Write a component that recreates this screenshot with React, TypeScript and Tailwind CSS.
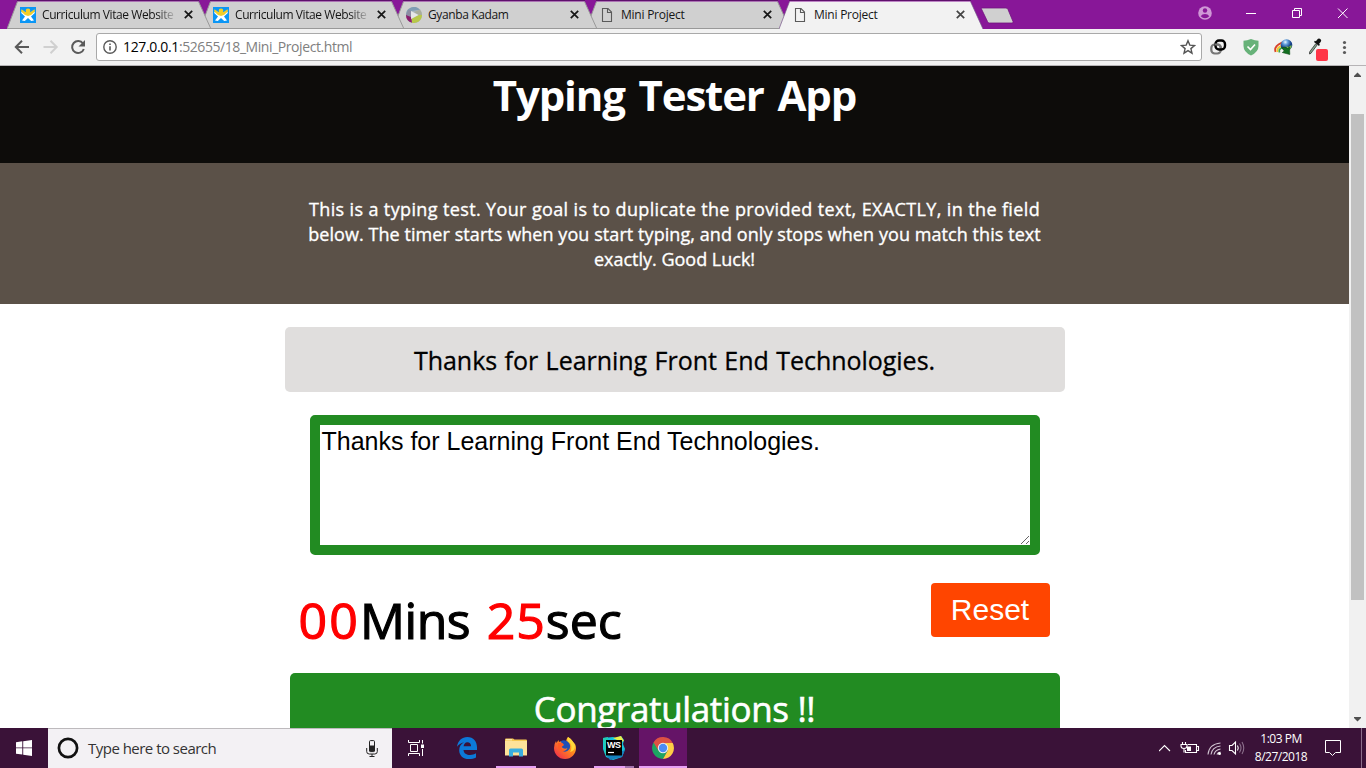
import React from 'react';

const comic = "font-['Open_Sans','Noto_Sans',sans-serif]";

function WixIcon() {
  return (
    <svg width="16" height="16" viewBox="0 0 16 16" className="shrink-0">
      <rect width="16" height="16" fill="#0b96f5" />
      <path d="M1.500 4.500 5 7l3-.5L11 7l3.500-2.500.3 1.500L11 9.500l3 4-2.800.5L8 11l-3.200 3-2.800-.5 3-4L1.200 6Z" fill="#fff" />
      <path d="m1.500 2.300 4 2.700h5l4-2.700.5 2L11 8 8 9 5 8 1 4.300Z" fill="#f0cd2c" />
      <circle cx="8" cy="3.800" r="2.300" fill="#f6cf23" />
    </svg>
  );
}

function SwirlIcon() {
  return (
    <svg width="16" height="16" viewBox="0 0 16 16" className="shrink-0">
      <circle cx="8" cy="8" r="8" fill="#a9b6bd" />
      <path d="M0 8A8 8 0 0 1 14 2.700L5 4v6Z" fill="#7f9db4" />
      <path d="M14 2.700A8 8 0 0 1 16 8l-3.500 0L8 5Z" fill="#a9ad9b" />
      <path d="M16 8A8 8 0 0 1 6 15.700L5 12l7.500-4Z" fill="#b8c84a" />
      <path d="M0 8a8 8 0 0 0 6 7.700L5 9 1 8Z" fill="#8b1c6e" />
      <path d="M2.500 2.500 5 4v6L0 8Z" fill="#8d8ba3" />
      <path d="m5 4 7.500 4L5 12Z" fill="#e6e6e6" />
    </svg>
  );
}

function PageIcon() {
  return (
    <svg width="16" height="16" viewBox="0 0 16 16" className="shrink-0" fill="none" stroke="#5a5a5a" strokeWidth="1.100">
      <path d="M3.500 1.500h5.500l3.500 3.500v9.500h-9Z" />
      <path d="M8.500 1.500v4h4" />
    </svg>
  );
}

const tabs = [
  { title: 'Curriculum Vitae Website', icon: <WixIcon />, z: 'z-[4]' },
  { title: 'Curriculum Vitae Website', icon: <WixIcon />, z: 'z-[3]' },
  { title: 'Gyanba Kadam', icon: <SwirlIcon />, z: 'z-[2]' },
  { title: 'Mini Project', icon: <PageIcon />, z: 'z-[1]' },
  { title: 'Mini Project', icon: <PageIcon />, z: 'z-[5]', active: true },
];

function TabStrip() {
  return (
    <div className="flex h-[29px] bg-[#881798] pl-[7px] text-[#161616]">
      {tabs.map((t, i) => (
        <div key={i} className={`relative -mr-[11px] flex h-[29px] w-[204px] shrink-0 items-center pl-[13px] ${t.z}`}>
          <svg className="absolute inset-0" width="204" height="29" viewBox="0 0 204 29">
            <path d="M0 29 10.500 1.500H191.500L204 29Z" fill={t.active ? '#f2f2f2' : '#d0d0d0'} />
            {!t.active && <path d="M0 28.500H204M191.500 1.500 204 29M0 29 10.500 1.500" stroke="#999" fill="none" />}
            {t.active && <path d="M191.500 1.500 204 29M0 29 10.500 1.500" stroke="#77548a" strokeWidth=".7" fill="none" />}
            <path d="M10 .5H192" stroke="#5f106c" />
          </svg>
          <div className="relative flex items-center gap-[6px]">
            {t.icon}
            <span className={`block w-[135px] text-[12px] leading-[16px] whitespace-nowrap ${t.title.length > 20 ? 'tracking-[-0.42px] mask-r-from-85% mask-r-to-100%' : t.title.length > 11 && !t.title.startsWith('Mini') ? 'tracking-[-0.38px]' : 'tracking-[-0.24px]'}`}>
              {t.title}
            </span>
            <svg width="9" height="9" viewBox="0 0 9 9" className="ml-px" stroke={t.active ? '#444' : '#161616'} strokeWidth="1.700">
              <path d="m.8.8 7.400 7.400M8.200.8.800 8.200" />
            </svg>
          </div>
        </div>
      ))}
      <svg width="36" height="29" viewBox="0 0 36 29" className="ml-[8px]">
        <path d="M1.500 9Q.5 8 2 8H26q1.500 0 2 1.500l5 12q.5 1.500-1 1.500H9.500q-1.500 0-2-1.500Z" fill="#d0d0d0" stroke="#72147f" strokeWidth=".8" />
      </svg>
      <div className="flex flex-1 justify-end">
        <svg width="168" height="29" viewBox="0 0 168 29" fill="none" stroke="#fff">
          <circle cx="7" cy="13" r="6.800" fill="#cf97d6" stroke="none" />
          <circle cx="7" cy="10.500" r="2.200" fill="#881798" stroke="none" />
          <path d="M2.700 16.300Q4 14 7 14t4.300 2.300Q9.500 18.300 7 18.300T2.700 16.300Z" fill="#881798" stroke="none" />
          <path d="M48 13.500h10M94.500 10.500h7v7h-7ZM96.500 10V8.500h7v7H102M140 8.500l9.500 9.500M149.500 8.500 140 18" />
        </svg>
      </div>
    </div>
  );
}

function Toolbar() {
  return (
    <div className="flex h-[37px] items-center border-b border-[#b6b4b6] bg-[#f2f2f2]">
      <svg width="96" height="36" viewBox="0 0 96 36" fill="none" strokeWidth="2">
        <path d="M29 18H16M22 11.800 15.800 18l6.200 6.200" stroke="#5a5a5a" />
        <path d="M43.500 18h13M50.500 11.800l6.200 6.200-6.200 6.200" stroke="#d0d0d0" />
        <path d="M83 14.500A6 6 0 1 0 83.800 20" stroke="#5a5a5a" />
        <path d="M85 11v6.500h-6.500Z" fill="#5a5a5a" />
      </svg>
      <div className="flex h-[28px] w-[1106px] items-center rounded-[3px] border border-[#a9a9a9] bg-white pl-[6px]">
        <svg width="14" height="14" viewBox="0 0 14 14" fill="none" stroke="#5a5a5a" strokeWidth="1.400">
          <circle cx="7" cy="7" r="6.200" />
          <path d="M7 6.200v4.300M7 3.500v1.500" strokeWidth="1.600" />
        </svg>
        <span className="ml-[6px] flex-1 text-[14px] leading-[20px] tracking-[-0.43px] text-[#808080]">
          <span className="tracking-[-0.35px] text-black">127.0.0.1</span>:52655/18_Mini_Project.html
        </span>
        <svg width="16" height="16" viewBox="0 0 16 16" className="mr-[5px]" fill="none" stroke="#555" strokeWidth="1.400">
          <path d="m8 1.700 1.800 4.400 4.700.4-3.600 3.100 1.100 4.600L8 11.700l-4 2.500 1.100-4.600L1.500 6.500l4.700-.4Z" />
        </svg>
      </div>
      <svg width="164" height="36" viewBox="0 0 164 36">
        <rect x="9.300" y="15.500" width="9.500" height="9" rx="3.500" fill="none" stroke="#777" strokeWidth="2.200" />
        <rect x="13.500" y="11.500" width="9.500" height="9" rx="3.500" fill="none" stroke="#000" strokeWidth="2.400" />
        <path d="M12.500 15.500h3q3.300 0 3.300 3.500" fill="none" stroke="#777" strokeWidth="2" />
        <path d="M49 10q4 1.800 7.500 1.800V17q0 6-7.500 9.500-7.500-3.500-7.500-9.500v-5.200Q45 11.800 49 10Z" fill="#67b279" />
        <path d="m45.500 17.500 3 3 4.500-5" fill="none" stroke="#fff" strokeWidth="1.600" />
        <defs>
          <radialGradient id="globe" cx=".4" cy=".25"><stop stopColor="#eef8ff" /><stop offset=".4" stopColor="#6aa5e0" /><stop offset="1" stopColor="#153f86" /></radialGradient>
        </defs>
        <path d="M73.500 23q-1.500-4.500 3-7.500t8-2" fill="none" stroke="#d8432b" strokeWidth="1.800" />
        <path d="M75.500 23q-1-3.500 2.500-5.500t6-1.500" fill="none" stroke="#f4c62b" strokeWidth="1.800" />
        <path d="M77.500 23.500q-1-3 1.500-4.300t5-1" fill="none" stroke="#3fa64a" strokeWidth="1.600" />
        <circle cx="84.500" cy="16" r="5.800" fill="url(#globe)" />
        <path d="M87 21q3-2 2.500-5l-3 2-3-1Z" fill="#7cb944" />
        <path d="M79.500 18.500q4-1 6 1l2-1.500.3 7.500-7.500-2 2-1.500q-1-1.500-2.800-3.500Z" fill="#126e1f" stroke="#0b4d14" strokeWidth=".6" />
        <path d="M107.500 25q-.5-2 1.500-4l4.500-6 1.500 1.200-4.500 6Q109 25 107.500 25Z" fill="#87a98f" stroke="#333" strokeWidth=".8" />
        <path d="m112 13 5 4 .8-1.200-.6-1.300 1.500-1.500q1.300-2-.4-3.100-1.900-.9-3.200.8l-1.200 1.500-1-.4Z" fill="#111" />
        <rect x="114" y="20" width="12" height="12" rx="2" fill="#ff3547" />
        <g fill="#5a5a5a"><circle cx="142.500" cy="13.500" r="1.600" /><circle cx="142.500" cy="18.500" r="1.600" /><circle cx="142.500" cy="23.500" r="1.600" /></g>
      </svg>
    </div>
  );
}

function Scrollbar() {
  return (
    <div className="flex w-[17px] shrink-0 flex-col items-center bg-[#f1f1f1]">
      <svg width="17" height="17" viewBox="0 0 17 17"><path d="M5 11v-1l3.500-3.500L12 10v1Z" fill="#505050" /></svg>
      <div className="mt-[31px] h-[486px] w-[13px] bg-[#c1c1c1]" />
      <svg width="17" height="17" viewBox="0 0 17 17" className="mt-auto"><path d="M5 6v1l3.500 3.500L12 7V6Z" fill="#505050" /></svg>
    </div>
  );
}

function TypingTester() {
  return (
    <div className={`flex-1 overflow-hidden bg-white ${comic}`}>
      <header className="h-[97px] bg-[#0d0c0a] pt-[4px] text-center">
        <h1 className="text-[42px] leading-[50px] font-bold tracking-[-1.15px] [word-spacing:4px] whitespace-nowrap text-white">Typing Tester App</h1>
      </header>
      <article className="flex h-[141px] flex-col items-center bg-[#5b5148] pt-[34px] text-[18px] leading-[25px] whitespace-nowrap text-white [-webkit-text-stroke:0.35px_white]">
        <p className="tracking-[0.37px]">This is a typing test. Your goal is to duplicate the provided text, EXACTLY, in the field</p>
        <p className="tracking-[0.07px]">below. The timer starts when you start typing, and only stops when you match this text</p>
        <p>exactly. Good Luck!</p>
      </article>
      <main className="mx-auto mt-[23px] flex w-[780px] flex-col">
        <div className="flex h-[65px] items-center justify-center rounded-[5px] bg-[#e0dedd] text-[25px] whitespace-nowrap text-black">
          <p className="pt-[2px] tracking-[-0.03px] [word-spacing:1px] [-webkit-text-stroke:0.3px_black]">Thanks for Learning Front End Technologies.</p>
        </div>
        <div className="relative mx-[25px] mt-[23px] h-[140px] rounded-[5px] border-[10px] border-[#228b22] bg-white px-[2px] py-[2px] font-['Liberation_Sans',Arial,sans-serif] text-[25px] leading-[29px] text-black">
          Thanks for Learning Front End Technologies.
          <svg width="9" height="9" viewBox="0 0 9 9" className="absolute right-0 bottom-0" stroke="#666" strokeWidth="1">
            <path d="M0 8 8 0M5 8l3-3" />
          </svg>
        </div>
        <div className="mt-[28px] flex h-[90px] items-start justify-between pr-[15px] pl-[14px]">
          <div className="pt-[3px] text-[50px] leading-[68px] whitespace-nowrap text-black">
            <span className="tracking-[2.2px] text-[#f00] [-webkit-text-stroke:1.2px_#f00]">00</span>
            <span className="tracking-[-0.5px] [-webkit-text-stroke:1.2px_black] [word-spacing:4px]">Mins </span>
            <span className="tracking-[1px] text-[#f00] [-webkit-text-stroke:1.2px_#f00]">25</span>
            <span className="[-webkit-text-stroke:1.2px_black]">sec</span>
          </div>
          <button className="h-[54px] w-[119px] rounded-[4px] bg-[#ff4500] pb-[2px] font-['Liberation_Sans',Arial,sans-serif] text-[30px] text-white">Reset</button>
        </div>
        <div className="mx-[5px] h-[80px] rounded-[5px] bg-[#228b22] pt-[11px] text-center text-[35px] leading-[50px] tracking-[-0.35px] text-white [-webkit-text-stroke:0.6px_white]">
          Congratulations !!
        </div>
      </main>
    </div>
  );
}

function EdgeIcon() {
  return (
    <svg width="20" height="22" viewBox="0 0 20 22">
      <path d="M0 9.700C1 3.500 5 0 10.300 0 16.500 0 20 4.700 20 10.300V13H6.500c.3 3.600 3.200 5 6.500 5 2.300 0 4.300-.6 6-1.700v4.200c-2 1-4.300 1.500-7 1.500C6 22 2.200 18.500 2.200 13.200c0-3.500 1.700-6.200 4.800-8C4 6 1.500 7.500 0 9.700Zm6.600-.4h7.500c-.1-2.500-1.500-4-3.700-4S6.900 7 6.600 9.300Z" fill="#0c79d8" />
    </svg>
  );
}

function FolderIcon() {
  return (
    <svg width="22" height="19" viewBox="0 0 22 19">
      <path d="M0 1.500Q0 .5 1 .5h7l1.500 1H21q1 0 1 1V17H0Z" fill="#f5c850" />
      <path d="M0 3h22v14.500H0Z" fill="#fde29a" />
      <path d="M4 18.500V12q0-1.500 1.500-1.500h11q1.500 0 1.500 1.500v6.500h-4V14.500H8v4Z" fill="#3aaee0" />
      <path d="M1 1.800h6" stroke="#fff4cf" />
    </svg>
  );
}

function FirefoxIcon() {
  return (
    <svg width="22" height="22" viewBox="0 0 22 22">
      <defs>
        <linearGradient id="fox" x1="1" y1="0" x2=".1" y2="1"><stop stopColor="#ffdc3a" /><stop offset=".45" stopColor="#ff8a1c" /><stop offset="1" stopColor="#f0264f" /></linearGradient>
      </defs>
      <path d="M14 0q4 2 5 5 3 2 3 6c0 6-4.500 11-11 11S0 17 0 11q0-4 2-7l.5 2 2-3 .5 2q4-2 7 0 0-3 2-5Z" fill="url(#fox)" />
      <path d="M6.500 4.500q3-2.500 7 0 4 3 2 7.500-3 4-7 2 4 0 5-3-3 2-6-1l2-2Z" fill="#1f4fb5" />
      <path d="M4 6q5-1 6 2l-3 2q0 3 4 3-2 3-5 1-3-3-2-8Z" fill="#ff5b26" />
      <path d="M14 0q-2 4 2 6 3 4 0 9 5-1 5-6.500Q19 3 14 0Z" fill="#ffd83a" />
    </svg>
  );
}

function WebStormIcon() {
  return (
    <svg width="24" height="24" viewBox="0 0 24 24">
      <path d="m1 2 10-1 3 1 5-2 3 4-1 4 2 5-3 8-9 3-7-3-3-8Z" fill="#15c5dc" />
      <path d="m11 2 8-2 3 5-3 1Z" fill="#e9ee4a" />
      <path d="m1 2 5-1-1 18-2-1Z" fill="#22cdb4" />
      <path d="m20 15 3-1-3 7-12 3-3-4Z" fill="#1681bd" />
      <rect x="4" y="4" width="16" height="15.500" fill="#000" />
      <text x="5" y="12.300" fill="#fff" fontFamily="Liberation Sans" fontWeight="700" fontSize="9" textLength="14">WS</text>
      <path d="M6 16.500h6" stroke="#fff" strokeWidth="1.200" />
    </svg>
  );
}

function ChromeIcon() {
  return (
    <svg width="22" height="22" viewBox="0 0 22 22">
      <path d="M1.500 5.500A11 11 0 0 0 11 22l5-8.500L11 11Z" fill="#1da462" />
      <path d="M20.500 5.500A11 11 0 0 1 11 22l4.800-8.500L13 6h7.700Z" fill="#ffcd46" />
      <path d="M1.500 5.500A11 11 0 0 1 20.700 6H11L6.500 13.700Z" fill="#dd5144" />
      <circle cx="11" cy="11" r="5.200" fill="#f1f1f1" />
      <circle cx="11" cy="11" r="4.200" fill="#4c8bf5" />
    </svg>
  );
}

function Taskbar() {
  return (
    <div className="flex h-[40px] bg-[#3a1238] text-white">
      <div className="flex w-[48px] items-center justify-center">
        <svg width="16" height="16" viewBox="0 0 16 16" fill="#fff"><path d="M0 2.200 6.300 1.300v6.200H0ZM7.200 1.200 16 0v7.500H7.200ZM0 8.300h6.300v6.300L0 13.800ZM7.200 8.300H16V16l-8.800-1.200Z" /></svg>
      </div>
      <div className="flex w-[344px] items-center border-t border-[#bdbabd] bg-[#f3f1f4] pl-[9px] text-[#333]">
        <svg width="22" height="22" viewBox="0 0 22 22" className="-mt-px"><circle cx="11" cy="11" r="9.100" fill="none" stroke="#111" strokeWidth="2.700" /></svg>
        <span className="-mt-[2px] ml-[9px] flex-1 text-[15px] leading-[20px] tracking-[-0.52px] whitespace-nowrap">Type here to search</span>
        <svg width="12" height="17" viewBox="0 0 12 17" className="mr-[14px] -mt-px" fill="none" stroke="#222">
          <rect x="3.500" y=".6" width="5" height="11" rx="1" /><path d="M3.500 6h5v5h-5Z" fill="#222" /><path d="M.7 8v3.500q0 2.500 2.500 2.500h5.600q2.500 0 2.500-2.500V8M6 14v2.500M3.500 16.500h5" />
        </svg>
      </div>
      <div className="flex w-[48px] items-center justify-center">
        <svg width="17" height="16" viewBox="0 0 17 16" fill="none" stroke="#fff"><path d="M.5 0v2.500h11V0M2.500 4.500h7v7h-7ZM.5 16v-2.500h11V16M14.500 0v3.500M14.500 9v7" /><path d="M13 4.500h3v3.500h-3Z" fill="#fff" stroke="none" /></svg>
      </div>
      <div className="flex w-[54px] items-center justify-center"><EdgeIcon /></div>
      <div className="ml-[2px] flex w-[40px] items-center justify-center border-b-2 border-[#e6a0f4]"><FolderIcon /></div>
      <div className="flex w-[58px] items-center justify-center"><FirefoxIcon /></div>
      <div className="flex w-[31px] items-center justify-end border-b-2 border-[#e6a0f4]"><div className="-mr-[1px] pt-px"><WebStormIcon /></div></div>
      <div className="w-[9px] border-b-2 border-[#a373ad]" />
      <div className="ml-[5px] flex w-[48px] items-center justify-center border-b-2 border-[#e6a0f4] bg-[#651467] pt-px"><ChromeIcon /></div>
      <div className="flex flex-1 justify-end">
        <svg width="86" height="40" viewBox="0 0 86 40" fill="none" stroke="#fff" strokeWidth="1.100">
          <path d="m0 23 5.500-5.500L11 23" />
          <path d="M29 16.500h8.500v8H26.500v-2.500M38 18.500h1.500v4H38M23.500 14v3M26.500 14v3M22 16.500h6v1.500q0 2.500-3 2.500t-3-2.500ZM25 20.500v4" />
          <path d="M28 18.500h4v4.500h-4Z" fill="#fff" stroke="none" />
          <path d="M49 26.500q1-10.500 12.500-11.500M52 26.500q1-7.500 9.500-8.500M55 26.500q1-4.500 6.500-5.500M58 26.500q.5-2 3.500-2.500" stroke="#d3c6d3" />
          <circle cx="60.500" cy="25.500" r="1.500" fill="#fff" stroke="none" />
          <path d="M70.500 17.500h2.500l3.500-3.500v12L73 22.500h-2.500Z" />
          <path d="M78.500 17.500q1.500 2.500 0 5" />
          <path d="M80.500 15.500q3 4.500 0 9M83 14q3.500 6 0 12" stroke="#8c708c" />
        </svg>
        <div className="flex w-[73px] flex-col items-center justify-center pr-px text-[12px] leading-[18px] tracking-[-0.5px] whitespace-nowrap">
          <span>1:03 PM</span><span>8/27/2018</span>
        </div>
        <svg width="48" height="40" viewBox="0 0 48 40" fill="none" stroke="#fff"><path d="M7.500 12.500h15v12h-5l-3 3-3-3h-4Z" /><path d="M43.500 0v40" stroke="#8b6e8a" /></svg>
      </div>
    </div>
  );
}

export default function App() {
  return (
    <div className="flex h-[768px] w-[1366px] flex-col overflow-hidden font-['Open_Sans','Noto_Sans',sans-serif]">
      <TabStrip />
      <Toolbar />
      <div className="flex h-[662px]">
        <TypingTester />
        <Scrollbar />
      </div>
      <Taskbar />
    </div>
  );
}
